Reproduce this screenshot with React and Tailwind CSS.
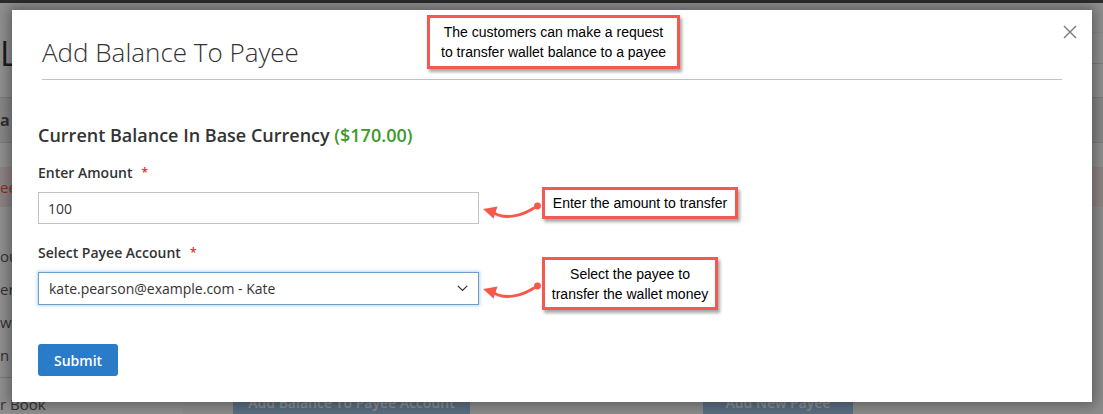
import React from 'react';

function Callout({ className, children }) {
  return (
    <div
      className={`absolute flex items-center justify-center border-[3px] border-[#f4594d] bg-white text-center font-['Liberation_Sans',Arial,sans-serif] text-[14px] leading-[20px] text-black shadow-[2px_3px_3px_rgba(0,0,0,0.35)] ${className}`}
    >
      <div>{children}</div>
    </div>
  );
}

function CurvedArrow({ className }) {
  return (
    <svg className={`absolute ${className}`} width="62" height="24" viewBox="0 0 62 24" fill="none">
      <path d="M3 11 L17.5 8.5 L13.5 20.5 Z" fill="#f4594d" />
      <path d="M14 15 C 24 21, 40 19, 54 10" stroke="#f4594d" strokeWidth="3" strokeLinecap="round" />
      <circle cx="57.5" cy="8" r="3.4" fill="#f4594d" />
    </svg>
  );
}

export default function App() {
  return (
    <div className="relative h-[414px] w-[1103px] overflow-hidden bg-white font-['Open_Sans',sans-serif] text-[#333]">
      {/* page behind the modal */}
      <div className="flex h-full flex-col">
        <div className="h-[3px] bg-[#222]" />
        <div className="flex h-[97px]">
          <div className="flex-1 pt-[30px]">
            <span className="text-[34px] font-normal leading-[40px] text-[#000]">L</span>
          </div>
          <div className="w-[320px]">
            <div className="h-[30px] border-b border-[#f2f2f2]" />
            <div className="h-[31px] border-b border-[#d0d0d0]" />
          </div>
        </div>
        <div className="flex h-[47px] items-center border-y border-[#d6d6d6] bg-[#ececec]">
          <span className="text-[16px] font-bold">a</span>
        </div>
        <div className="h-[25px]" />
        <div className="flex h-[41px] items-center bg-[#fae5e5] text-[15px] text-[#e02b27]">
          <span>ee</span>
        </div>
        <div className="flex flex-1">
          <div className="w-[183px] pt-[33px] text-[15px]">
            <div className="leading-[33px]">ou</div>
            <div className="leading-[33px]">ers</div>
            <div className="leading-[33px]">wn</div>
            <div className="leading-[33px]">n L</div>
            <div className="mt-[5px] border-t border-[#d1d1d1] pt-[16px] leading-[20px]">r Book</div>
          </div>
          <div className="flex flex-1 items-end gap-[233px] bg-[#f8f8f8] pl-[50px]">
            <div className="flex h-[24px] w-[237px] items-center justify-center bg-[#8ab8e3] text-[14px] font-semibold text-white">
              Add Balance To Payee Account
            </div>
            <div className="flex h-[24px] w-[150px] items-center justify-center bg-[#8ab8e3] text-[14px] font-semibold text-white">
              Add New Payee
            </div>
          </div>
        </div>
      </div>

      {/* overlay */}
      <div className="absolute inset-0 bg-[rgba(51,51,51,0.55)]" />

      {/* modal */}
      <div className="absolute left-[12px] top-[10px] flex h-[392px] w-[1080px] flex-col bg-white shadow-[0_0_12px_3px_rgba(0,0,0,0.35)]">
        <div className="mx-[30px] border-b border-[#c1c1c1] pb-[13px] pt-[28px]">
          <h1 className="text-[26px] font-light leading-[28px] text-[#333]">Add Balance To Payee</h1>
        </div>
        <button className="absolute right-[15px] top-[15px] flex h-[14px] w-[14px] items-center justify-center">
          <svg width="14" height="14" viewBox="0 0 14 14" fill="none">
            <path d="M1 1 L13 13 M13 1 L1 13" stroke="#7a7a7a" strokeWidth="1.4" />
          </svg>
        </button>

        <div className="flex flex-col pl-[26px]">
          <h2 className="mt-[43px] text-[18px] font-semibold leading-[24px] text-[#333]">
            Current Balance In Base Currency <span className="text-[#3d9a2a]">($170.00)</span>
          </h2>

          <label className="mt-[16px] flex text-[14px] font-semibold leading-[20px] text-[#333]">
            Enter Amount
            <span className="ml-[9px] text-[12px] text-[#e02b27]">*</span>
          </label>
          <div className="mt-[9px] flex h-[32px] w-[441px] items-center border border-[#c2c2c2] bg-white pl-[9px] text-[14px] text-[#333]">
            100
          </div>

          <label className="mt-[19px] flex text-[14px] font-semibold leading-[20px] text-[#333]">
            Select Payee Account
            <span className="ml-[9px] text-[12px] text-[#e02b27]">*</span>
          </label>
          <div className="mt-[9px] flex h-[33px] w-[441px] items-center justify-between border border-[#6c9fcc] bg-white pl-[10px] pr-[10px] text-[14px] text-[#333] shadow-[0_0_3px_1px_rgba(104,168,224,0.45)]">
            <span>kate.pearson@example.com - Kate</span>
            <svg width="11" height="7" viewBox="0 0 11 7" fill="none">
              <path d="M0.8 0.8 L5.5 5.5 L10.2 0.8" stroke="#333" strokeWidth="1.2" />
            </svg>
          </div>

          <div className="mt-[39px]">
            <button className="h-[32px] rounded-[3px] bg-[#2a7bc8] px-[16px] text-[14px] font-semibold text-white">
              Submit
            </button>
          </div>
        </div>
      </div>

      {/* annotations */}
      <Callout className="left-[427px] top-[15px] h-[54px] w-[253px]">
        The customers can make a request
        <br />
        to transfer wallet balance to a payee
      </Callout>
      <Callout className="left-[542px] top-[187px] h-[32px] w-[196px]">Enter the amount to transfer</Callout>
      <Callout className="left-[542px] top-[257px] h-[53px] w-[176px]">
        Select the payee to
        <br />
        transfer the wallet money
      </Callout>
      <CurvedArrow className="left-[480px] top-[198px]" />
      <CurvedArrow className="left-[480px] top-[278px]" />
    </div>
  );
}
